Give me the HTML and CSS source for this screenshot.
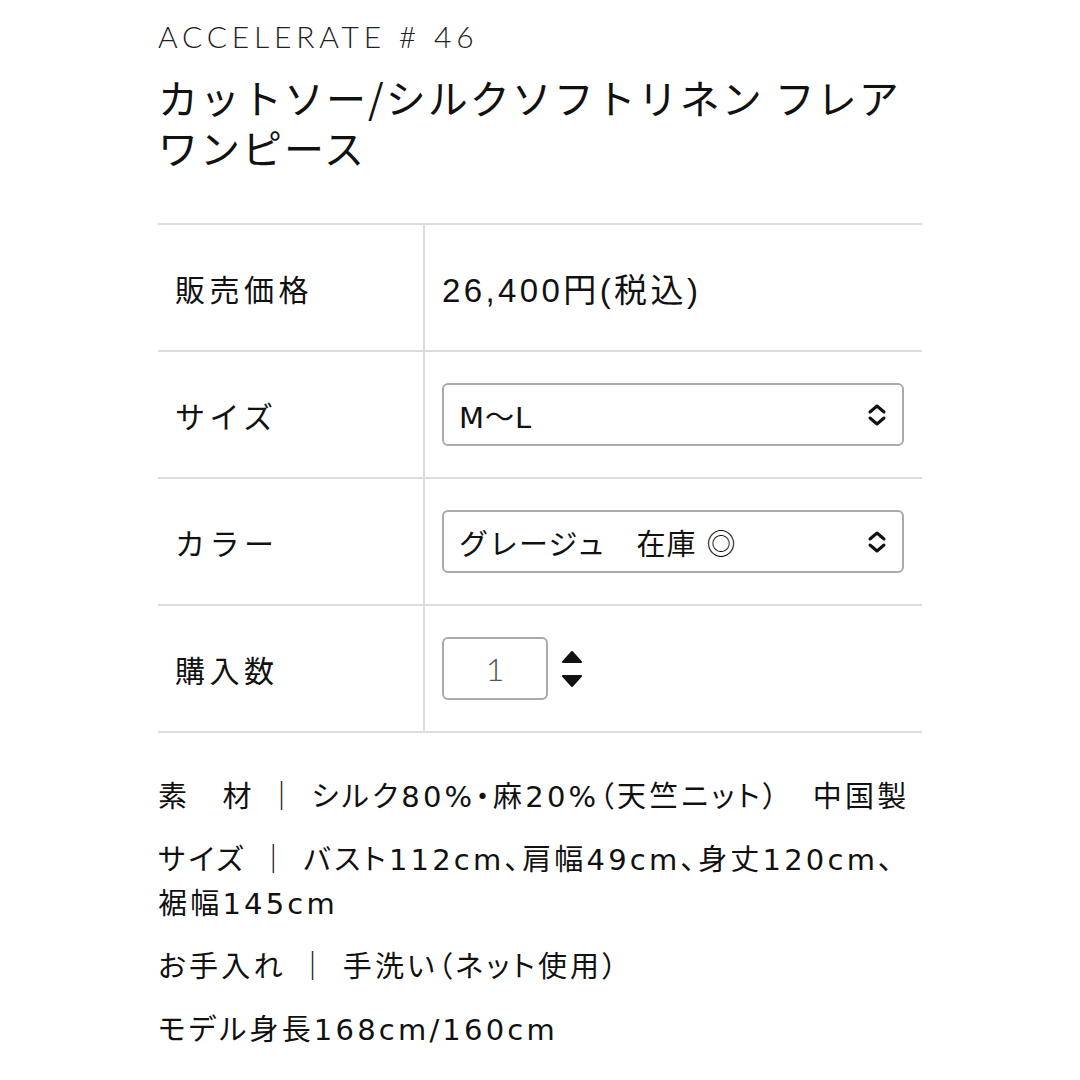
FILE: index.html
```html
<!DOCTYPE html>
<html lang="ja">
<head>
<meta charset="utf-8">
<link rel="stylesheet" href="styles.css">
</head>
<body>
<div class="page">
  <div class="brand">ACCELERATE # 46</div>
  <h1 class="title">カットソー/シルクソフトリネン フレア<br>ワンピース</h1>

  <div class="spec">
    <div class="row">
      <div class="label">販売価格</div>
      <div class="value"><span class="price">26,400円(税込)</span></div>
    </div>
    <div class="row">
      <div class="label">サイズ</div>
      <div class="value">
        <div class="select">
          <span>M〜L</span>
          <svg class="chev" width="20" height="24" viewBox="0 0 20 24"><path d="M3 9 L10 3 L17 9 M3 15 L10 21 L17 15" fill="none" stroke="#111" stroke-width="3" stroke-linecap="round" stroke-linejoin="round"/></svg>
        </div>
      </div>
    </div>
    <div class="row">
      <div class="label">カラー</div>
      <div class="value">
        <div class="select">
          <span>グレージュ　在庫 <span class="mark">◎</span></span>
          <svg class="chev" width="20" height="24" viewBox="0 0 20 24"><path d="M3 9 L10 3 L17 9 M3 15 L10 21 L17 15" fill="none" stroke="#111" stroke-width="3" stroke-linecap="round" stroke-linejoin="round"/></svg>
        </div>
      </div>
    </div>
    <div class="row">
      <div class="label">購入数</div>
      <div class="value">
        <div class="qty">1</div>
        <svg class="spin" width="22" height="40" viewBox="0 0 22 40"><path d="M11 3 L20 13 L2 13 Z" fill="#111" stroke="#111" stroke-width="2" stroke-linejoin="round"/><path d="M2 27 L20 27 L11 37 Z" fill="#111" stroke="#111" stroke-width="2" stroke-linejoin="round"/></svg>
      </div>
    </div>
  </div>

  <div class="notes">
    <p>素　材 ｜ シルク80%・麻20%（天竺ニット）　中国製</p>
    <p>サイズ ｜ バスト112cm、肩幅49cm、身丈120cm、裾幅145cm</p>
    <p>お手入れ ｜ 手洗い（ネット使用）</p>
    <p>モデル身長168cm/160cm</p>
  </div>
</div>
</body>
</html>
```

FILE: styles.css
```css
* { box-sizing: border-box; }
html, body { margin: 0; padding: 0; background: #fff; }
body {
  font-family: "Noto Sans CJK JP", "Noto Sans", sans-serif;
  color: #111;
}
.page {
  width: 922px;
  padding-left: 158px;
  padding-top: 14px;
}
.brand {
  font-family: Lato, "Noto Sans", sans-serif;
  font-weight: 300;
  font-size: 30px;
  letter-spacing: 4.8px;
  line-height: 44px;
  color: #222;
}
.title {
  margin: 14px 0 0;
  font-weight: 400;
  font-size: 40px;
  letter-spacing: 2px;
  line-height: 50px;
  color: #111;
}
.spec {
  margin-top: 51px;
  border-top: 2px solid #ddd;
}
.row {
  display: grid;
  grid-template-columns: 267px 1fr;
  height: 127px;
  border-bottom: 2px solid #ddd;
}
.label {
  display: flex;
  align-items: center;
  padding-left: 17px;
  border-right: 2px solid #ddd;
  font-size: 30px;
  letter-spacing: 4.5px;
}
.value {
  display: flex;
  align-items: center;
  padding-left: 17px;
  gap: 13px;
  font-size: 29px;
}
.price {
  font-family: "Liberation Sans", "Noto Sans CJK JP", sans-serif;
  font-size: 33px;
  letter-spacing: 3.4px;
}
.select {
  width: 462px;
  height: 63px;
  border: 2px solid #aaa;
  border-radius: 6px;
  display: flex;
  align-items: center;
  justify-content: space-between;
  padding: 0 15px 0 15px;
  font-family: "DejaVu Sans", "Noto Sans CJK JP", sans-serif;
  font-size: 29px;
  letter-spacing: 1px;
}
.mark {
  font-family: "Noto Sans CJK JP", sans-serif;
}
.chev { display: block; }
.qty {
  width: 106px;
  height: 63px;
  border: 2px solid #aaa;
  border-radius: 6px;
  display: flex;
  align-items: center;
  justify-content: center;
  font-family: Lato, sans-serif;
  font-weight: 300;
  font-size: 32px;
  color: #555;
}
.spin { display: block; }
.notes {
  margin-top: 42px;
  font-family: "DejaVu Sans", "Noto Sans CJK JP", sans-serif;
  font-feature-settings: "palt";
  font-size: 29px;
  letter-spacing: 3.2px;
  line-height: 44px;
}
.notes p { margin: 0 0 19px; }
```
